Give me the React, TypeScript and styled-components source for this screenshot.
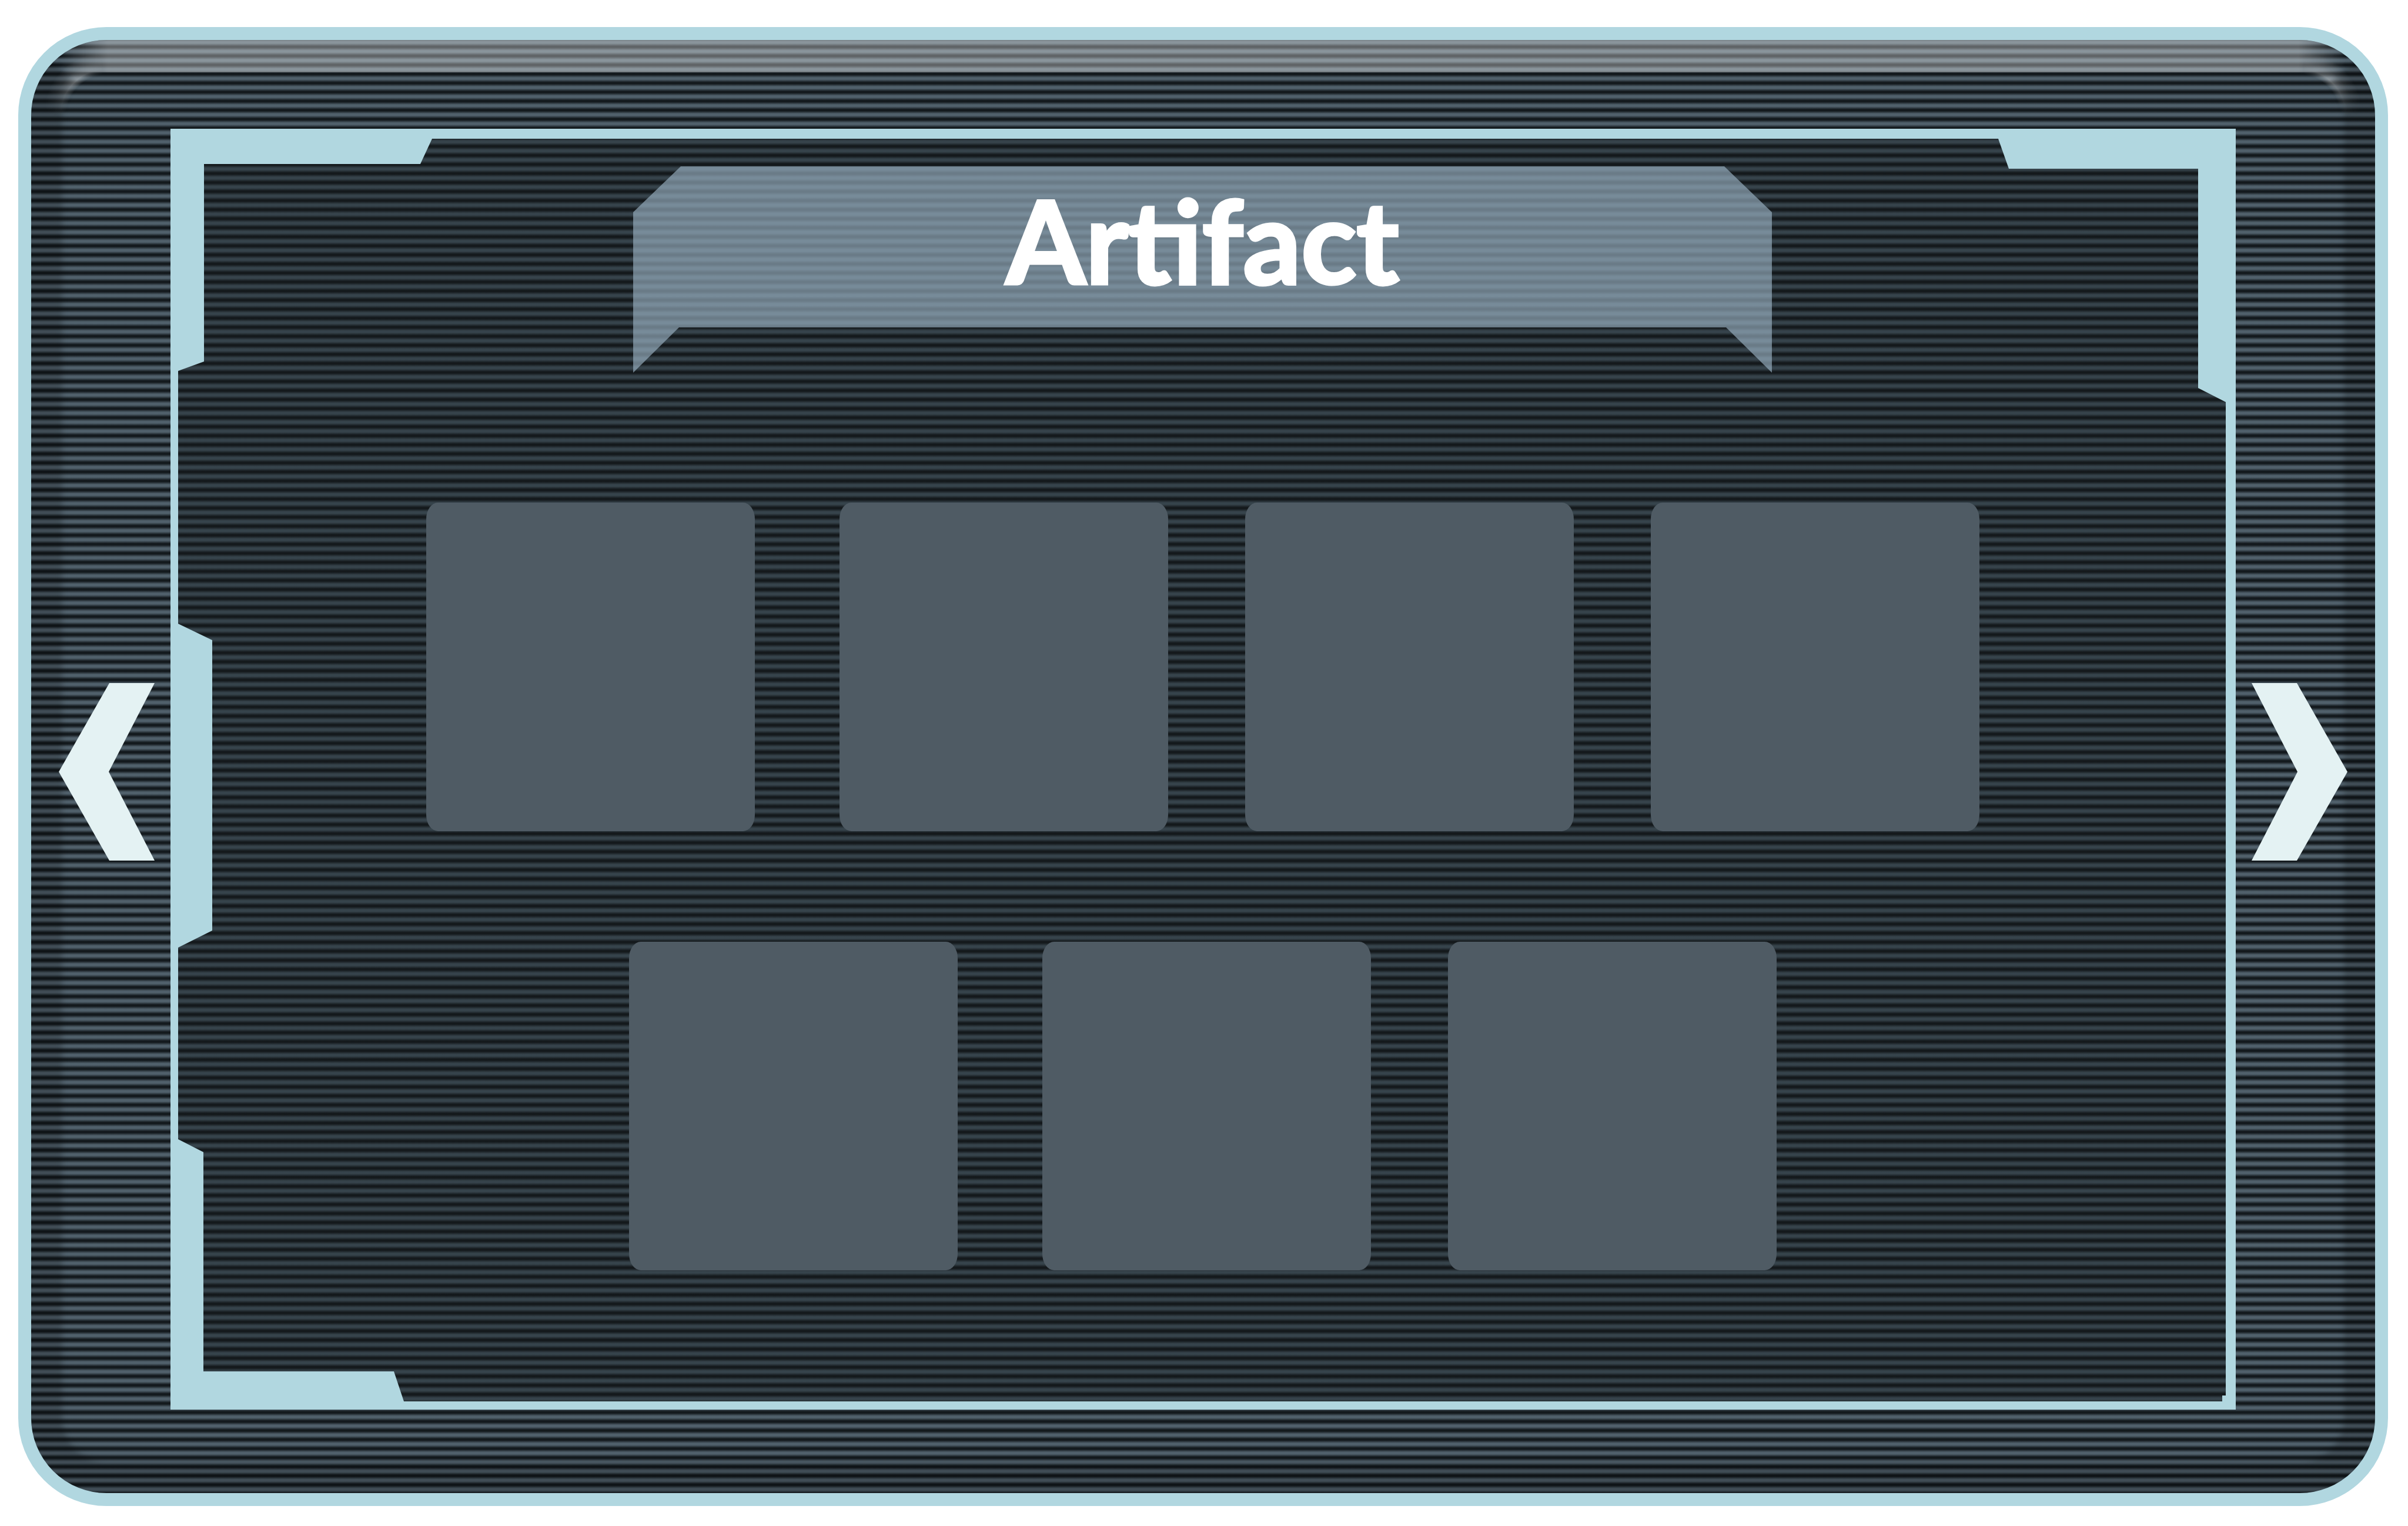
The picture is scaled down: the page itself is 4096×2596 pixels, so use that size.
import React from "react";
import styled, { createGlobalStyle } from "styled-components";

const FRAME = "#b1d7e0";
const ARROW = "#e4f2f3";

/* Thirteen soft scanlines, drawn as one 200px tile. */
const SCANLINES = 13;
const scanlines = (light: string, dark: string) => {
  const stops: string[] = [];
  for (let i = 0; i < SCANLINES; i++) {
    const at = (part: number) => `${(((i + part) / SCANLINES) * 100).toFixed(3)}%`;
    stops.push(
      `${light} ${at(0)}`,
      `${light} ${at(0.1)}`,
      `${dark} ${at(0.42)}`,
      `${dark} ${at(0.58)}`,
      `${light} ${at(0.9)}`,
      `${light} ${at(1)}`
    );
  }
  return `linear-gradient(to bottom, ${stops.join(", ")})`;
};

const GlobalStyle = createGlobalStyle`
  *, *::before, *::after { box-sizing: border-box; }
  body { margin: 0; background: #fff; font-family: Lato, "Open Sans", sans-serif; }
`;

const Page = styled.div`
  display: flex;
  min-height: 100vh;
  padding: 46px 34px 34px 31px;
`;

const Console = styled.main`
  position: relative;
  flex: 1;
  display: grid;
  grid-template-columns: 237px 1fr 237px;
  overflow: hidden;
  border: 22px solid ${FRAME};
  border-radius: 150px;
  background: ${scanlines("#50606b", "#13191d")} 0 4px / 100% 200px;
`;

const Shade = styled.div`
  position: absolute;
  inset: -20px;
  border: 73px solid rgba(0, 0, 0, 0.2);
  border-top-color: transparent;
  border-radius: 148px;
  filter: blur(5px);
  pointer-events: none;
`;

const Glare = styled.div`
  position: absolute;
  top: 0;
  left: 0;
  right: 0;
  height: 55px;
  background: rgba(255, 255, 255, 0.33);
  mask-image: linear-gradient(
    to right,
    transparent 50px,
    #000 130px,
    #000 calc(100% - 130px),
    transparent calc(100% - 50px)
  );
  pointer-events: none;
`;

const CornerShine = styled.div<{ $side: "left" | "right" }>`
  position: absolute;
  top: 0;
  ${(p) => p.$side}: 0;
  width: 128px;
  height: 128px;
  transform: ${(p) => (p.$side === "right" ? "scaleX(-1)" : "none")};
  background: conic-gradient(
    from 270deg at 100% 100%,
    transparent 0deg,
    rgba(255, 255, 255, 0.12) 20deg,
    rgba(255, 255, 255, 0.36) 50deg,
    rgba(255, 255, 255, 0.2) 68deg,
    transparent 86deg
  );
  mask-image: radial-gradient(
    circle at 100% 100%,
    transparent 68px,
    #000 78px,
    rgba(0, 0, 0, 0.4) 92px,
    transparent 108px
  );
  pointer-events: none;
`;

const NavButton = styled.button<{ $side: "left" | "right" }>`
  position: relative;
  display: flex;
  align-items: center;
  justify-content: ${(p) => (p.$side === "left" ? "flex-end" : "flex-start")};
  padding: 18px 27px 0;
  border: 0;
  background: none;
  cursor: pointer;
`;

const Arrow = styled.svg`
  width: 163px;
  height: 302px;
  fill: ${ARROW};
`;

const Screen = styled.section`
  position: relative;
  display: flex;
  flex-direction: column;
  align-items: center;
  margin: 151px 0 142px;
  padding: 47px 0 0 2px;
  border: solid ${FRAME};
  border-width: 17px 17px 14px 13px;
  background: ${scanlines("#36434b", "#14191c")} 0 -164px / 100% 200px;
`;

const Bracket = styled.span`
  position: absolute;
  background: ${FRAME};
`;

const TopLeft = styled(Bracket)`
  top: 0;
  left: 0;
  width: 432px;
  height: 395px;
  clip-path: polygon(0 0, 432px 0, 412px 43px, 44px 43px, 44px 379px, 0 395px);
`;

const TopRight = styled(Bracket)`
  top: 0;
  right: 0;
  width: 387px;
  height: 448px;
  clip-path: polygon(0 0, 387px 0, 387px 448px, 340px 424px, 340px 51px, 18px 51px);
`;

const LeftTab = styled(Bracket)`
  top: 825px;
  left: 0;
  width: 58px;
  height: 551px;
  clip-path: polygon(0 0, 58px 28px, 58px 522px, 0 551px);
`;

const BottomLeft = styled(Bracket)`
  bottom: 0;
  left: 0;
  width: 384px;
  height: 446px;
  clip-path: polygon(0 0, 43px 22px, 43px 395px, 367px 395px, 384px 446px, 0 446px);
`;

const BottomRight = styled(Bracket)`
  right: 0;
  bottom: 0;
  width: 6px;
  height: 10px;
`;

const Banner = styled.header`
  display: flex;
  justify-content: center;
  width: 1937px;
  height: 351px;
  background: rgba(160, 184, 201, 0.62);
  clip-path: polygon(
    81px 0,
    calc(100% - 81px) 0,
    100% 78px,
    100% 100%,
    calc(100% - 78px) 274px,
    78px 274px,
    0 100%,
    0 78px
  );
`;

const Title = styled.h1`
  margin: 0;
  padding-top: 5px;
  color: #fff;
  font-size: 195px;
  font-weight: 700;
  line-height: 240px;
  -webkit-text-stroke: 5px #fff;
  stroke-linejoin: round;
`;

const Slots = styled.div`
  display: flex;
  flex-direction: column;
  align-items: center;
  gap: 188px;
  margin-top: 221px;
`;

const SlotRow = styled.ul`
  display: flex;
  gap: 131px;
  margin: 0;
  padding: 0;
  list-style: none;
`;

const Slot = styled.li`
  width: 559px;
  height: 559px;
  border-radius: 20px / 28px;
  background: #4f5b64;

  &:first-child {
    margin-right: 13px;
  }
`;

const ROWS = [
  ["a1", "a2", "a3", "a4"],
  ["b1", "b2", "b3"],
];

export default function App() {
  return (
    <>
      <GlobalStyle />
      <Page>
        <Console>
          <Shade />
          <Glare />
          <CornerShine $side="left" />
          <CornerShine $side="right" />
          <NavButton type="button" $side="left" aria-label="Previous">
            <Arrow viewBox="0 0 163 302" aria-hidden="true">
              <path d="M86 0H163L85 151L163 302H86L0 151Z" />
            </Arrow>
          </NavButton>
          <Screen>
            <TopLeft />
            <TopRight />
            <LeftTab />
            <BottomLeft />
            <BottomRight />
            <Banner>
              <Title>Artifact</Title>
            </Banner>
            <Slots>
              {ROWS.map((row, i) => (
                <SlotRow key={i}>
                  {row.map((id) => (
                    <Slot key={id} />
                  ))}
                </SlotRow>
              ))}
            </Slots>
          </Screen>
          <NavButton type="button" $side="right" aria-label="Next">
            <Arrow viewBox="0 0 163 302" aria-hidden="true">
              <path d="M0 0H77L163 151L77 302H0L78 151Z" />
            </Arrow>
          </NavButton>
        </Console>
      </Page>
    </>
  );
}
